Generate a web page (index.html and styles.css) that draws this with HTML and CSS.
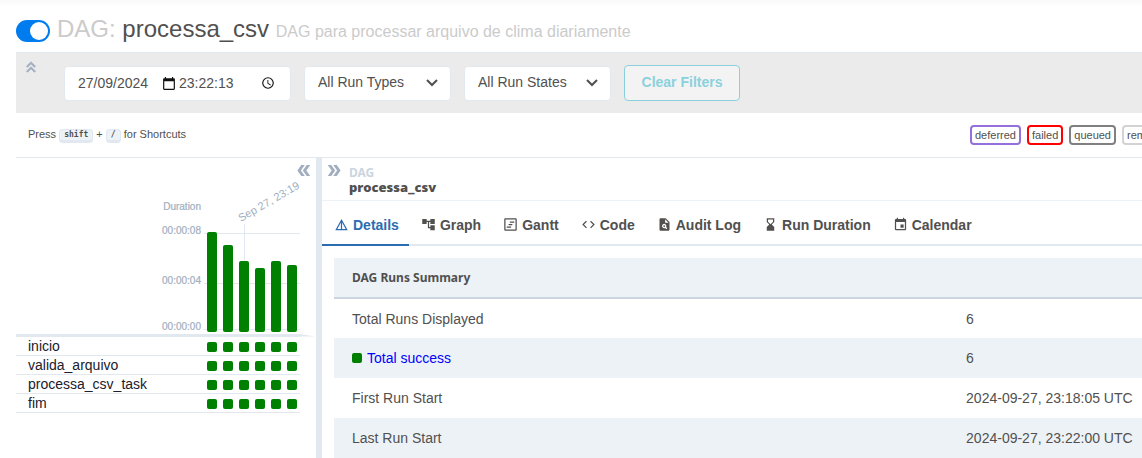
FILE: index.html
```html
<!DOCTYPE html>
<html lang="pt-BR">
<head>
<meta charset="utf-8">
<meta name="viewport" content="width=device-width, initial-scale=1">
<title>processa_csv - Grid</title>
<link rel="stylesheet" href="styles.css">
</head>
<body>
<div class="page">
  <header class="dag-header">
    <input class="switch" type="checkbox" role="switch" aria-label="Pause or unpause DAG" checked>
    <h1 class="dag-title"><span class="muted">DAG:</span> processa_csv <small class="muted">DAG para processar arquivo de clima diariamente</small></h1>
  </header>

  <section class="filters" aria-label="Filters">
    <button class="icon-button collapse" type="button" aria-label="Hide filters">
      <svg viewBox="4 4 16 16"><path d="M6 17.6 7.4 19l4.6-4.6 4.6 4.6 1.4-1.4-6-6zM6 11l1.4 1.4L12 7.8l4.6 4.6L18 11l-6-6z"/></svg>
    </button>
    <div class="datetime">
      <input class="date" type="text" aria-label="Date" value="27/09/2024">
      <svg class="calendar" viewBox="2 1 20 22"><path d="M20 3h-1V1h-2v2H7V1H5v2H4c-1.100 0-2 .9-2 2v16c0 1.100.9 2 2 2h16c1.100 0 2-.9 2-2V5c0-1.100-.9-2-2-2zm0 18H4V8h16v13z"/></svg>
      <input class="time" type="text" aria-label="Time" value="23:22:13">
      <svg class="clock" viewBox="0 0 24 24"><path d="M12 2a10 10 0 1 0 0 20 10 10 0 0 0 0-20zm0 18a8 8 0 1 1 0-16 8 8 0 0 1 0 16zm.5-13H11v6l5.200 3.200.8-1.300-4.500-2.700V7z"/></svg>
    </div>
    <div class="select">
      <select aria-label="Run types"><option>All Run Types</option></select>
      <svg viewBox="0 0 14 10"><path d="M2 2l5 5 5-5"/></svg>
    </div>
    <div class="select">
      <select aria-label="Run states"><option>All Run States</option></select>
      <svg viewBox="0 0 14 10"><path d="M2 2l5 5 5-5"/></svg>
    </div>
    <button class="clear" type="button">Clear Filters</button>
  </section>

  <section class="info-bar">
    <p class="shortcuts">Press <kbd>shift</kbd> + <kbd>/</kbd> for Shortcuts</p>
    <div class="legend">
      <span class="state deferred">deferred</span>
      <span class="state failed">failed</span>
      <span class="state queued">queued</span>
      <span class="state removed">removed</span>
    </div>
  </section>

  <main class="content">
    <section class="grid-panel" aria-label="Grid">
      <button class="icon-button to-left" type="button" aria-label="Collapse grid">
        <svg viewBox="3 5 18 14"><path d="M8.500 5H13l-5 7 5 7H8.500l-5-7zM15.500 5H20l-5 7 5 7h-4.500l-5-7z"/></svg>
      </button>
      <svg class="chart" viewBox="0 0 300 179" role="img" aria-label="Run durations">
        <g class="rules">
          <path d="M188 75.500h96M188 125.500h96M188 171.500h96M228.500 66v40"/>
        </g>
        <g class="axis" text-anchor="end">
          <text x="185" y="52">Duration</text>
          <text x="185" y="76">00:00:08</text>
          <text x="185" y="126">00:00:04</text>
          <text x="185" y="172">00:00:00</text>
        </g>
        <text class="tick" transform="translate(225 64) rotate(-30)">Sep 27, 23:19</text>
        <g class="bars">
          <rect x="191" y="74" width="10" height="100" rx="2"/>
          <rect x="207" y="87" width="10" height="87" rx="2"/>
          <rect x="223" y="103" width="10" height="71" rx="2"/>
          <rect x="239" y="110" width="10" height="64" rx="2"/>
          <rect x="255" y="103" width="10" height="71" rx="2"/>
          <rect x="271" y="107" width="10" height="67" rx="2"/>
        </g>
        <path class="edge" d="M0 176h284l15 2.500H284V179H0z"/>
      </svg>
      <table class="tasks">
        <tbody>
          <tr><th scope="row">inicio</th><td><div class="runs"><i></i><i></i><i></i><i></i><i></i><i></i></div></td></tr>
          <tr><th scope="row">valida_arquivo</th><td><div class="runs"><i></i><i></i><i></i><i></i><i></i><i></i></div></td></tr>
          <tr><th scope="row">processa_csv_task</th><td><div class="runs"><i></i><i></i><i></i><i></i><i></i><i></i></div></td></tr>
          <tr><th scope="row">fim</th><td><div class="runs"><i></i><i></i><i></i><i></i><i></i><i></i></div></td></tr>
        </tbody>
      </table>
    </section>

    <section class="details" aria-label="DAG details">
      <div class="crumb">
        <button class="icon-button to-right" type="button" aria-label="Collapse details">
          <svg viewBox="3 5 18 14"><path d="M15.500 5H11l5 7-5 7h4.500l5-7zM8.500 5H4l5 7-5 7h4.500l5-7z"/></svg>
        </button>
        <div class="crumb-text">
          <span class="crumb-label">DAG</span>
          <strong class="crumb-name">processa_csv</strong>
        </div>
      </div>
      <nav class="tabs" role="tablist">
        <button class="tab active" type="button" role="tab" aria-selected="true"><svg viewBox="0 0 24 24"><path d="M12 3 2 21h20L12 3zm1 5.900L18.600 19H13V8.900zm-2 0V19H5.400L11 8.900z"/></svg>Details</button>
        <button class="tab" type="button" role="tab"><svg viewBox="0 0 24 24"><path d="M22 11V3h-7v3H9V3H2v8h7V8h2v10h4v3h7v-8h-7v3h-2V8h2v3z"/></svg>Graph</button>
        <button class="tab" type="button" role="tab"><svg viewBox="0 0 24 24"><path d="M20 4v16H4V4h16m0-2H4c-1.100 0-2 .9-2 2v16c0 1.100.9 2 2 2h16c1.100 0 2-.9 2-2V4c0-1.100-.9-2-2-2zM11 7h7v2h-7zM9 11h6v2H9zM6 15h7v2H6z"/></svg>Gantt</button>
        <button class="tab" type="button" role="tab"><svg viewBox="0 0 24 24"><path d="M9.400 16.600 4.800 12l4.600-4.600L8 6l-6 6 6 6 1.400-1.400zm5.200 0 4.600-4.600-4.600-4.600L16 6l6 6-6 6-1.400-1.400z"/></svg>Code</button>
        <button class="tab" type="button" role="tab"><svg viewBox="0 0 24 24"><path d="M14 2H6c-1.100 0-2 .9-2 2v16c0 1.100.9 2 2 2h12c1.100 0 2-.9 2-2V8l-6-6zm1.040 17.450-1.880-1.880c-1.330.71-3.010.53-4.130-.59a3.500 3.500 0 0 1 0-4.950 3.500 3.500 0 0 1 4.950 0 3.480 3.480 0 0 1 .59 4.130l1.880 1.880-1.410 1.410zM13 9V3.500L18.500 9H13z"/><circle cx="11.500" cy="14.500" r="1.500"/></svg>Audit Log</button>
        <button class="tab" type="button" role="tab"><svg viewBox="0 0 24 24"><path d="M18 22v-6l-4-4 4-4V2H6v6l4 4-4 4v6h12zM8 7.500V4h8v3.500l-4 4-4-4z"/></svg>Run Duration</button>
        <button class="tab" type="button" role="tab"><svg viewBox="0 0 24 24"><path d="M17 12h-5v5h5v-5zM16 1v2H8V1H6v2H5c-1.100 0-2 .9-2 2v14a2 2 0 0 0 2 2h14c1.100 0 2-.9 2-2V5c0-1.100-.9-2-2-2h-1V1h-2zm3 18H5V8h14v11z"/></svg>Calendar</button>
      </nav>
      <table class="summary">
        <thead><tr><th scope="col">DAG Runs Summary</th><th></th></tr></thead>
        <tbody>
          <tr><td>Total Runs Displayed</td><td>6</td></tr>
          <tr><td><a class="success" href="#success"><i></i>Total success</a></td><td>6</td></tr>
          <tr><td>First Run Start</td><td>2024-09-27, 23:18:05 UTC</td></tr>
          <tr><td>Last Run Start</td><td>2024-09-27, 23:22:00 UTC</td></tr>
        </tbody>
      </table>
    </section>
  </main>
</div>
</body>
</html>
```
FILE: styles.css
```css
*, *::before, *::after { box-sizing: border-box; }

body {
  margin: 0;
  background: #fff;
  color: #51504f;
  font: 14px/20px "Liberation Sans", Arial, sans-serif;
}

button, input, select { font: inherit; color: inherit; }
button { cursor: pointer; }
svg { display: block; flex: none; fill: currentColor; }

.page {
  display: flex;
  flex-direction: column;
  min-height: 100vh;
  padding-left: 16px;
  overflow: hidden;
  background: linear-gradient(#f9f9f9, #fff 7px);
}

/* Header */
.dag-header {
  display: flex;
  align-items: center;
  gap: 7px;
  height: 52px;
  padding-top: 10px;
}
.switch {
  appearance: none;
  flex: none;
  width: 34px;
  height: 22px;
  margin: 0;
  padding: 2px;
  border-radius: 11px;
  background: #017cee;
}
.switch::before {
  content: "";
  display: block;
  width: 18px;
  height: 18px;
  border-radius: 50%;
  background: #fff;
}
.switch:checked::before { margin-left: auto; }
.dag-title {
  margin: 0;
  padding-bottom: 2px;
  font-size: 24px;
  line-height: 28px;
  font-weight: 400;
  white-space: nowrap;
}
.dag-title small { font-size: 16px; }
.muted { color: #cbcbcb; }

/* Filters */
.filters {
  display: flex;
  align-items: center;
  height: 61px;
  border-top: 1px solid #e2e8f0;
  background: #ebebeb;
}
.icon-button {
  padding: 0;
  border: 0;
  background: none;
  color: #a0aec0;
}
.collapse {
  align-self: flex-start;
  margin: 8px 27px 0 9px;
}
.collapse svg { width: 12px; height: 12px; stroke: currentColor; }
.datetime, .select {
  display: flex;
  align-items: center;
  height: 35px;
  margin-right: 13px;
  border: 1px solid #e2e8f0;
  border-radius: 4px;
  background: #fff;
}
.datetime { width: 227px; padding: 0 14px 0 13px; }
.datetime input {
  padding: 0;
  border: 0;
  outline: 0;
  background: none;
}
.date { width: 85px; }
.time { width: 82px; margin-left: 4px; }
.datetime svg { width: 14px; height: 14px; color: #111; }
.datetime .calendar { width: 12px; height: 13px; }
.select { position: relative; width: 147px; }
.select select {
  appearance: none;
  width: 100%;
  height: 100%;
  padding: 0 32px 2px 13px;
  border: 0;
  background: none;
}
.select svg {
  position: absolute;
  right: 11px;
  width: 14px;
  height: 10px;
  fill: none;
  stroke: currentColor;
  stroke-width: 2;
  pointer-events: none;
}
.clear {
  width: 116px;
  height: 36px;
  padding: 0 0 2px;
  border: 1px solid #8bd1dd;
  border-radius: 4px;
  background: #f3f3f3;
  color: #8bd1dd;
  font-weight: 700;
}

/* Shortcuts and state legend */
.info-bar {
  display: flex;
  justify-content: space-between;
  align-items: center;
  height: 45px;
  padding-left: 12px;
  border-bottom: 1px solid #e2e8f0;
  font-size: 11px;
  white-space: nowrap;
}
.shortcuts { margin: 0; padding-bottom: 2px; }
kbd {
  padding: 0 4px 1px;
  border: 1px solid #e2e8f0;
  border-bottom-width: 3px;
  border-radius: 4px;
  background: #edf2f7;
  font: 700 8px/12px "DejaVu Sans Mono", monospace;
  vertical-align: 1px;
}
.legend {
  display: flex;
  flex: 0 0 172px;
  gap: 6px;
  overflow: hidden;
}
.state {
  flex: none;
  padding: 0 3px;
  border: 2px solid;
  border-radius: 4px;
  line-height: 16px;
}
.deferred { border-color: mediumpurple; }
.failed { border-color: red; }
.queued { border-color: gray; }
.removed { border-color: lightgrey; }

/* Grid */
.content { display: flex; flex: 1; }
.grid-panel {
  position: relative;
  flex: 0 0 306px;
  border-right: 6px solid #e2e8f0;
}
.to-left { position: absolute; top: 7px; right: 5px; }
.to-left svg, .to-right svg { width: 14px; height: 11px; }
.chart { width: 300px; height: 179px; }
.rules path { fill: none; stroke: #e2e8f0; }
.axis, .tick { fill: #a0aec0; font-size: 10px; }
.axis { stroke: #a0aec0; stroke-width: 0.2; }
.tick { font-size: 11px; }
.bars { fill: green; }
.edge { fill: #e2e8f0; }
.tasks {
  width: 284px;
  border-collapse: separate;
  border-spacing: 0;
  color: #1a202c;
}
.tasks th, .tasks td {
  height: 19px;
  padding: 1px 0 0;
  border-bottom: 1px solid #e2e8f0;
  line-height: 17px;
}
.tasks th { padding-left: 12px; font-weight: 400; text-align: left; }
.runs {
  display: flex;
  justify-content: flex-end;
  gap: 6px;
  padding-right: 3px;
}
.runs i, .success i {
  width: 10px;
  height: 10px;
  border-radius: 2px;
  background: green;
}

/* Details */
.details { flex: 1; min-width: 0; }
.crumb {
  display: flex;
  gap: 8px;
  height: 43px;
  padding: 7px 0 0 5px;
  border-bottom: 1px solid #edf2f7;
}
.to-right { align-self: flex-start; }
.crumb-text {
  display: flex;
  flex-direction: column;
  font-family: "Noto Sans", sans-serif;
  font-weight: 700;
  line-height: 15px;
}
.crumb-label { color: #cbd5e0; font-size: 12px; }
.crumb-name { font-size: 13px; }
.tabs { display: flex; border-bottom: 2px solid #e2e8f0; }
.tab {
  display: flex;
  align-items: center;
  gap: 4px;
  height: 45px;
  margin-bottom: -2px;
  padding: 4px 10px 0 12px;
  border: 0;
  border-bottom: 2px solid transparent;
  background: none;
  font-weight: 700;
  white-space: nowrap;
}
.tab svg { width: 15px; height: 15px; }
.tab.active { border-color: #2b6cb0; color: #2b6cb0; }
.summary {
  width: calc(100% - 12px);
  margin: 12px 0 0 12px;
  border-collapse: collapse;
  table-layout: fixed;
}
.summary th, .summary td {
  height: 40px;
  padding: 0 0 0 18px;
  text-align: left;
  white-space: nowrap;
}
.summary th {
  border-bottom: 2px solid #cbd5e0;
  font: 700 12px/16px "Noto Sans", sans-serif;
}
.summary th:first-child { width: 76%; }
.summary thead, .summary tbody tr:nth-child(even) { background: #edf2f7; }
.success {
  display: flex;
  align-items: center;
  gap: 5px;
  color: #00f;
  text-decoration: none;
}
```
